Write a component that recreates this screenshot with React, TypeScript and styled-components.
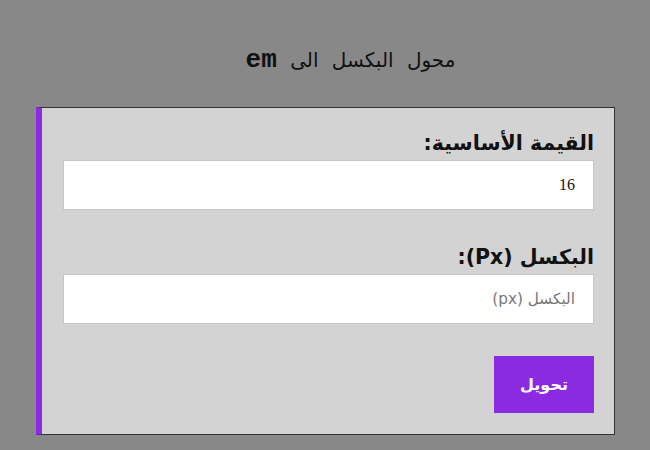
import styled, { createGlobalStyle } from "styled-components";

const GlobalStyle = createGlobalStyle`
  html, body {
    margin: 0;
    padding: 0;
    background: #888888;
  }
  body {
    font-family: "DejaVu Sans", sans-serif;
  }
`;

const Page = styled.main`
  direction: rtl;
  padding: 43px 35px 0 36px;
`;

const Title = styled.h1`
  margin: 0 0 30px;
  padding-left: 50px;
  text-align: center;
  font-size: 20px;
  font-weight: normal;
  color: #111;
  line-height: 34px;
  word-spacing: 7px;
`;

const Unit = styled.span`
  font-family: "Liberation Mono", monospace;
  font-weight: bold;
  font-size: 26px;
`;

const Card = styled.form`
  background: #d3d3d3;
  border: 1px solid #333;
  border-left: 6px solid #8a2be2;
  padding: 20px 20px 21px 21px;
  display: flex;
  flex-direction: column;
`;

const Field = styled.div`
  display: flex;
  flex-direction: column;
  margin-bottom: 32px;
`;

const Label = styled.label`
  font-size: 20.5px;
  font-weight: bold;
  color: #111;
  line-height: 30px;
  margin-bottom: 2px;
`;

const Input = styled.input`
  direction: rtl;
  height: 50px;
  box-sizing: border-box;
  border: 1px solid #c6c6c6;
  background: #fff;
  padding: 0 18px;
  font-family: "Liberation Serif", serif;
  font-size: 16px;
  color: #111;
  outline: none;

  &::placeholder {
    font-family: "DejaVu Sans", sans-serif;
    font-size: 15.3px;
    color: #777;
  }
`;

const Button = styled.button`
  align-self: flex-start;
  width: 100px;
  height: 57px;
  border: none;
  background: #8a2be2;
  color: #fff;
  font-family: "DejaVu Sans", sans-serif;
  font-weight: bold;
  font-size: 16px;
  cursor: pointer;
`;

export default function App() {
  return (
    <>
      <GlobalStyle />
      <Page>
        <Title>
          محول البكسل الى <Unit>em</Unit>
        </Title>
        <Card onSubmit={(e) => e.preventDefault()}>
          <Field>
            <Label htmlFor="base">القيمة الأساسية:</Label>
            <Input id="base" type="text" defaultValue="16" />
          </Field>
          <Field>
            <Label htmlFor="px">البكسل (Px):</Label>
            <Input id="px" type="text" placeholder="البكسل (px)" />
          </Field>
          <Button type="submit">تحويل</Button>
        </Card>
      </Page>
    </>
  );
}
